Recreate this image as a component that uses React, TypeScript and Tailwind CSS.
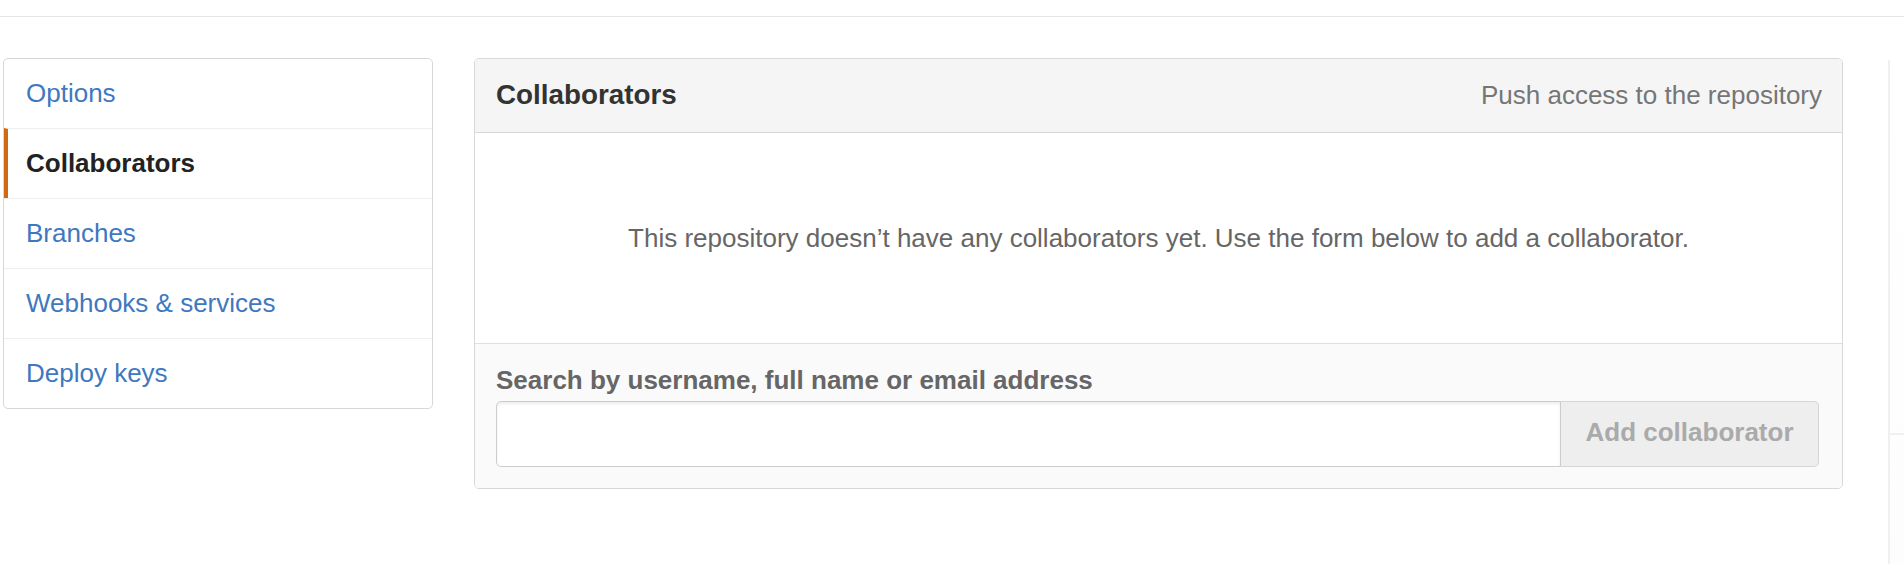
import React from "react";

const items = [
  { label: "Options", active: false },
  { label: "Collaborators", active: true },
  { label: "Branches", active: false },
  { label: "Webhooks & services", active: false },
  { label: "Deploy keys", active: false },
];

export default function App() {
  return (
    <div className="w-[1904px] h-[564px] overflow-hidden bg-white font-['Liberation_Sans',Arial,Helvetica,sans-serif]">
      <div className="h-[17px] border-b border-[#e5e5e5]" />
      <div className="flex items-start pt-[41px] pl-[3px]">
        {/* Sidebar */}
        <nav className="w-[430px] shrink-0 border border-[#d8d8d8] rounded-[5px] bg-white overflow-hidden">
          {items.map((it, i) => (
            <div
              key={it.label}
              className={
                (i > 0 ? "border-t border-[#eeeeee] h-[70px] " : "h-[69px] ") +
                (it.active
                  ? "border-l-[4px] border-l-[#d26911] pl-[18px] font-bold text-[#222222] "
                  : "pl-[22px] text-[#4078c0] ") +
                "flex items-center pb-[2px] text-[26px] leading-none"
              }
            >
              {it.label}
            </div>
          ))}
        </nav>

        {/* Main panel */}
        <section className="ml-[41px] w-[1369px] shrink-0 border border-[#d8d8d8] rounded-[5px] overflow-hidden">
          <div className="h-[74px] bg-[#f5f5f5] border-b border-[#d8d8d8] flex items-center justify-between pl-[21px] pr-[20px] pb-[2px]">
            <h3 className="text-[27.8px] font-bold text-[#333333] leading-none">Collaborators</h3>
            <span className="text-[26px] text-[#767676] leading-none">Push access to the repository</span>
          </div>
          <div className="h-[210px] flex items-center justify-center bg-white">
            <p className="text-[26px] text-[#666666] leading-none">
              This repository doesn’t have any collaborators yet. Use the form below to add a collaborator.
            </p>
          </div>
          <div className="border-t border-[#e0e0e0] bg-[#fafafa] pt-[18px] pb-[21px] pl-[21px] pr-[23px]">
            <label className="block text-[26px] font-bold text-[#666666] leading-[36px] mb-[3px]">
              Search by username, full name or email address
            </label>
            <div className="flex h-[66px]">
              <input
                type="text"
                className="flex-1 min-w-0 border border-[#cccccc] rounded-l-[5px] bg-white shadow-[inset_0_2px_3px_rgba(0,0,0,0.075)] outline-none px-3 text-[26px]"
              />
              <button className="w-[258px] shrink-0 flex items-center justify-center border border-l-0 border-[#d5d5d5] rounded-r-[5px] bg-[#eeeeee] text-[26px] font-bold text-[#aaaaaa] leading-none pb-[5px]">
                Add collaborator
              </button>
            </div>
          </div>
        </section>

        {/* Cut-off right column */}
        <div className="ml-[45px] flex-1 h-[506px] mt-[2px] border-l-[2px] border-[#f0f0f0] bg-gradient-to-b from-white to-[#fdfdfd]">
          <div className="h-[373px]" />
          <div className="border-t-[2px] border-[#f0f0f0]" />
        </div>
      </div>
    </div>
  );
}
